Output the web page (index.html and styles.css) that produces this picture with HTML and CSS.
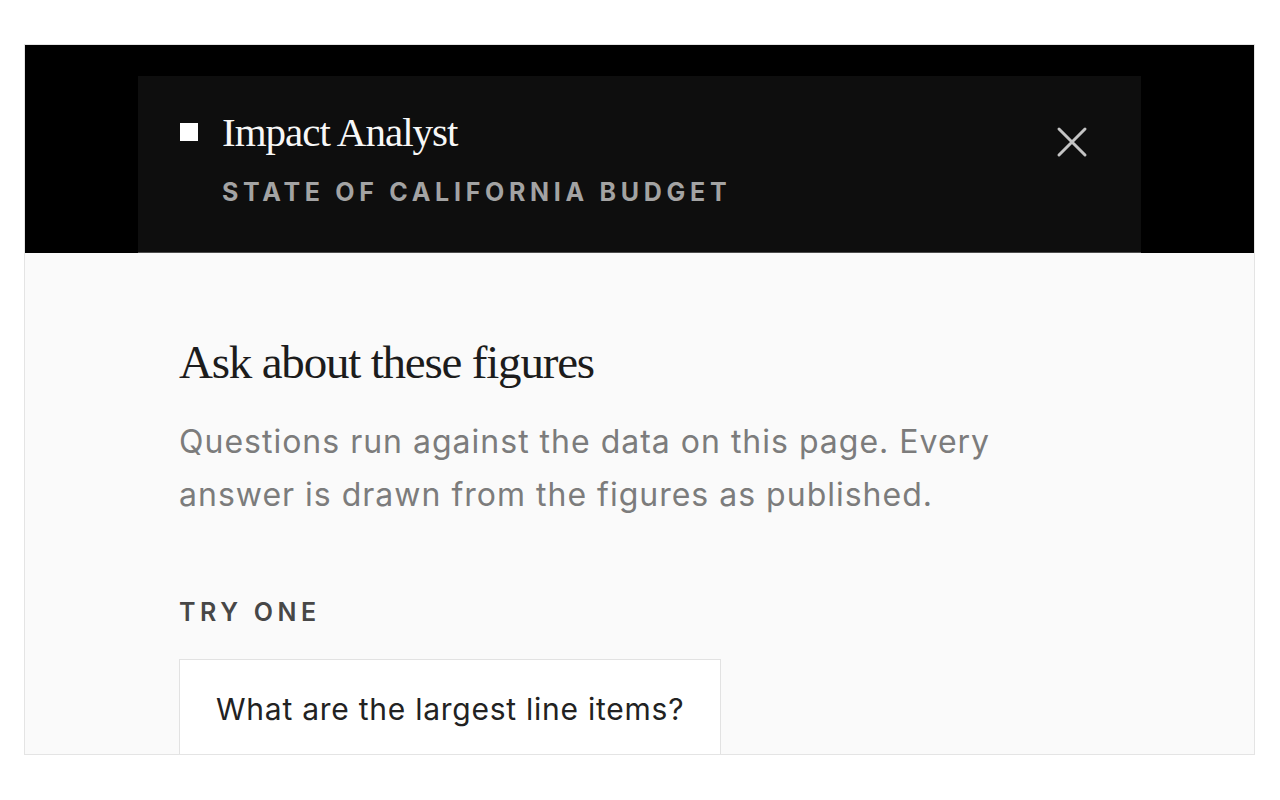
FILE: index.html
```html
<!DOCTYPE html>
<html lang="en">
<head>
<meta charset="utf-8">
<title>Impact Analyst</title>
<link rel="stylesheet" href="styles.css">
</head>
<body>
<div class="frame">
  <div class="band">
    <header class="panel">
      <div class="brand">
        <div class="brand-row">
          <span class="brand-mark"></span>
          <h1 class="brand-title">Impact Analyst</h1>
        </div>
        <div class="brand-sub">STATE OF CALIFORNIA BUDGET</div>
      </div>
      <button class="close" aria-label="Close">
        <svg width="32" height="32" viewBox="0 0 32 32" aria-hidden="true">
          <path d="M3 3 L29 29 M29 3 L3 29" stroke="currentColor" stroke-width="3" stroke-linecap="round" fill="none"/>
        </svg>
      </button>
    </header>
  </div>
  <main class="content">
    <h2 class="heading">Ask about these figures</h2>
    <p class="lede">Questions run against the data on this page. Every answer is drawn from the figures as published.</p>
    <div class="label">TRY ONE</div>
    <button class="suggestion">What are the largest line items?</button>
  </main>
</div>
</body>
</html>
```
FILE: styles.css
```css
html, body {
  margin: 0;
  padding: 0;
  background: #ffffff;
}

.frame {
  margin: 44px 0 0 24px;
  width: 1229px;
  height: 709px;
  border: 1px solid #e4e4e4;
  background: #fafafa;
  overflow: hidden;
}

.band {
  background: #000000;
  padding: 31px 0 0 113px;
}

.panel {
  width: 961px;
  height: 176px;
  padding: 0 0 0 42px;
  background: #0e0e0e;
  border-bottom: 1px solid #4d4d4d;
  display: flex;
  justify-content: space-between;
  align-items: flex-start;
}

.brand {
  padding-top: 32px;
}

.brand-row {
  display: flex;
  align-items: center;
  gap: 24px;
}

.brand-mark {
  width: 18px;
  height: 18px;
  background: #ffffff;
  flex: none;
}

.brand-title {
  margin: 0;
  font-family: "Liberation Serif", "Times New Roman", serif;
  font-weight: 400;
  font-size: 41px;
  line-height: 48px;
  letter-spacing: -1px;
  color: #f7f7f7;
}

.brand-sub {
  margin: 21px 0 0 42px;
  font-family: Inter, "Liberation Sans", Arial, sans-serif;
  font-weight: 700;
  font-size: 25px;
  line-height: 30px;
  letter-spacing: 4.7px;
  color: #a3a3a3;
}

.close {
  margin: 50px 53px 0 0;
  padding: 0;
  width: 32px;
  height: 32px;
  border: 0;
  background: transparent;
  color: #c4c4c4;
  display: flex;
}

.content {
  padding: 82px 0 0 154px;
}

.heading {
  margin: 0;
  font-family: "Liberation Serif", "Times New Roman", serif;
  font-weight: 400;
  font-size: 47px;
  line-height: 55px;
  letter-spacing: -1.2px;
  color: #1c1c1c;
}

.lede {
  margin: 25px 0 0;
  width: 840px;
  font-family: Inter, "Liberation Sans", Arial, sans-serif;
  font-size: 32px;
  line-height: 53px;
  letter-spacing: 1px;
  color: #7c7c7c;
}

.label {
  margin-top: 76px;
  font-family: Inter, "Liberation Sans", Arial, sans-serif;
  font-weight: 600;
  font-size: 25px;
  line-height: 30px;
  letter-spacing: 4.6px;
  color: #474747;
}

.suggestion {
  display: block;
  margin-top: 32px;
  padding: 29px 36px;
  background: #ffffff;
  border: 1px solid #e2e2e2;
  font-family: Inter, "Liberation Sans", Arial, sans-serif;
  font-size: 30px;
  line-height: 40px;
  letter-spacing: 0.75px;
  color: #222222;
  text-align: left;
}
```
